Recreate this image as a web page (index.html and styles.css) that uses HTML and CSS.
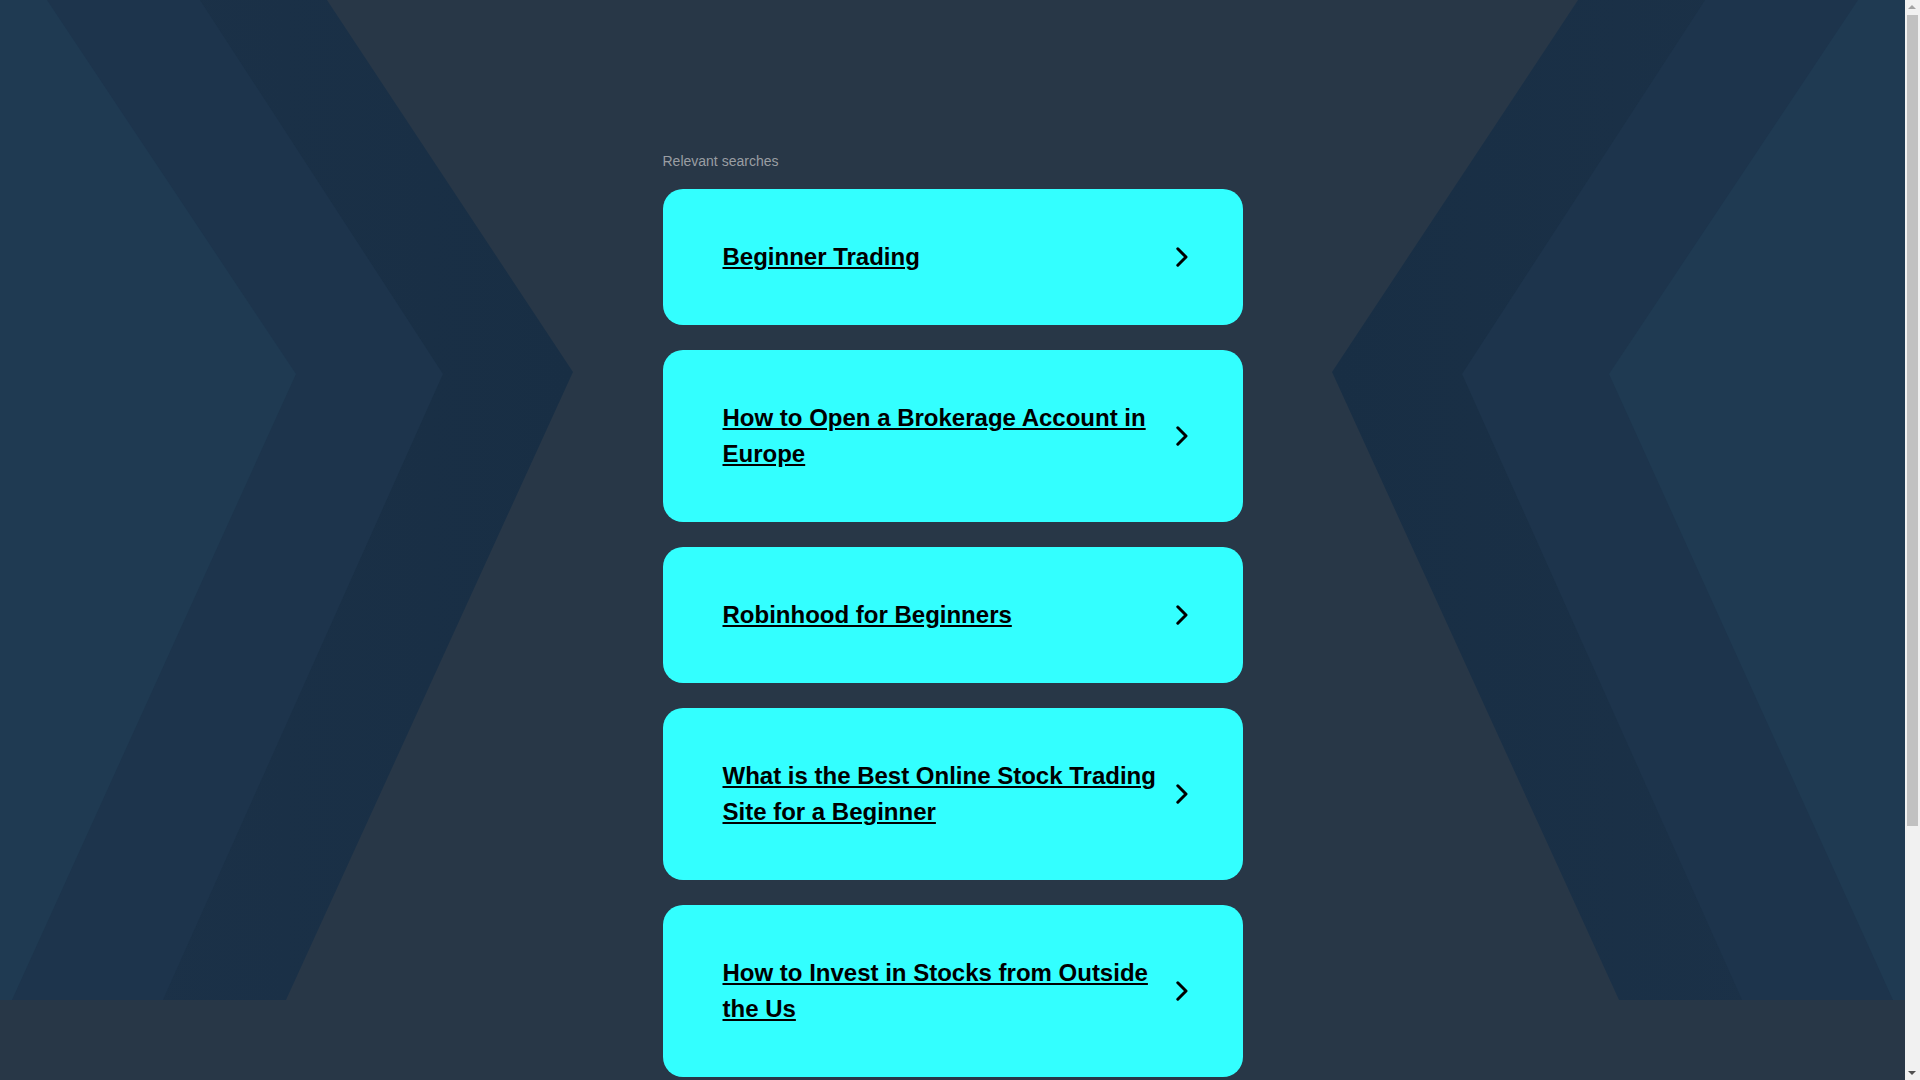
FILE: index.html
```html
<!DOCTYPE html>
<html lang="en">
<head>
<meta charset="utf-8">
<title>Relevant searches</title>
<link rel="stylesheet" href="styles.css">
</head>
<body>
<div class="backdrop" aria-hidden="true">
  <svg class="backdrop-svg" viewBox="0 0 1905 1000" preserveAspectRatio="none" xmlns="http://www.w3.org/2000/svg">
    <defs>
      <linearGradient id="gl" x1="0" y1="0" x2="1" y2="0">
        <stop offset="0" stop-color="#1c3249"/>
        <stop offset="1" stop-color="#182e44"/>
      </linearGradient>
      <linearGradient id="gr" x1="1" y1="0" x2="0" y2="0">
        <stop offset="0" stop-color="#1c3249"/>
        <stop offset="1" stop-color="#182e44"/>
      </linearGradient>
    </defs>
    <polygon points="0,0 327,0 573,372 286,1000 0,1000" fill="url(#gl)"/>
    <polygon points="0,0 200,0 443,374 163,1000 0,1000" fill="#1d344c"/>
    <polygon points="0,0 47,0 296,374 12,1000 0,1000" fill="#1f3a52"/>
    <polygon points="1905,0 1578,0 1332,372 1619,1000 1905,1000" fill="url(#gr)"/>
    <polygon points="1905,0 1705,0 1462,374 1742,1000 1905,1000" fill="#1d344c"/>
    <polygon points="1905,0 1858,0 1609,374 1893,1000 1905,1000" fill="#1f3a52"/>
  </svg>
</div>

<main class="page">
  <section class="searches">
    <p class="label">Relevant searches</p>
    <ul class="list">
      <li><a class="card" href="#"><span class="title">Beginner Trading</span><svg class="chev" viewBox="0 0 12 20" width="12" height="20"><path d="M1.8 1.8 L10 10 L1.8 18.2" /></svg></a></li>
      <li><a class="card" href="#"><span class="title">How to Open a Brokerage Account in Europe</span><svg class="chev" viewBox="0 0 12 20" width="12" height="20"><path d="M1.8 1.8 L10 10 L1.8 18.2" /></svg></a></li>
      <li><a class="card" href="#"><span class="title">Robinhood for Beginners</span><svg class="chev" viewBox="0 0 12 20" width="12" height="20"><path d="M1.8 1.8 L10 10 L1.8 18.2" /></svg></a></li>
      <li><a class="card" href="#"><span class="title">What is the Best Online Stock Trading Site for a Beginner</span><svg class="chev" viewBox="0 0 12 20" width="12" height="20"><path d="M1.8 1.8 L10 10 L1.8 18.2" /></svg></a></li>
      <li><a class="card" href="#"><span class="title">How to Invest in Stocks from Outside the Us</span><svg class="chev" viewBox="0 0 12 20" width="12" height="20"><path d="M1.8 1.8 L10 10 L1.8 18.2" /></svg></a></li>
    </ul>
  </section>
</main>

<div class="scrollbar" aria-hidden="true">
  <span class="sb-arrow sb-up"></span>
  <span class="sb-thumb"></span>
  <span class="sb-arrow sb-down"></span>
</div>
</body>
</html>
```

FILE: styles.css
```css
html, body {
  margin: 0;
  padding: 0;
}

html {
  background: #283747;
  scrollbar-width: none;
}

body {
  background: #283747;
  font-family: "Liberation Sans", Arial, sans-serif;
  position: relative;
  margin-right: 15px;
  min-height: 1400px;
}

.backdrop {
  position: absolute;
  top: 0;
  left: 0;
  width: 100%;
  height: 1000px;
  overflow: hidden;
  z-index: 0;
}

.backdrop-svg {
  display: block;
  width: 100%;
  height: 100%;
}

.page {
  position: relative;
  z-index: 1;
  padding: 153px 0 323px;
}

.searches {
  width: 580px;
  margin: 0 auto;
}

.label {
  margin: 0 0 20px;
  font-size: 14px;
  line-height: 16px;
  color: #9a9ea3;
}

.list {
  list-style: none;
  margin: 0;
  padding: 0;
  display: flex;
  flex-direction: column;
  gap: 25px;
}

.card {
  display: flex;
  align-items: center;
  gap: 12px;
  padding: 50px 55px 50px 60px;
  background: #33ffff;
  border-radius: 20px;
  color: #000;
  text-decoration: none;
}

.title {
  flex: 1;
  font-size: 24px;
  line-height: 36px;
  font-weight: 700;
  text-decoration: underline;
  color: #000;
}

.chev {
  flex: none;
  display: block;
}

.chev path {
  fill: none;
  stroke: #000;
  stroke-width: 3;
  stroke-linecap: round;
  stroke-linejoin: round;
}

/* imitation of the classic browser scrollbar seen in the screenshot */
.scrollbar {
  position: fixed;
  top: 0;
  right: 0;
  width: 15px;
  height: 100vh;
  background: #f1f1f1;
  z-index: 5;
}

.sb-thumb {
  position: absolute;
  top: 15px;
  left: 2px;
  width: 11px;
  height: 811px;
  background: #c1c1c1;
}

.sb-arrow {
  position: absolute;
  left: 3px;
  width: 0;
  height: 0;
  border-left: 4.5px solid transparent;
  border-right: 4.5px solid transparent;
}

.sb-up {
  top: 5px;
  border-bottom: 4.5px solid #a3a3a3;
}

.sb-down {
  bottom: 5px;
  border-top: 4.5px solid #505050;
}
```
